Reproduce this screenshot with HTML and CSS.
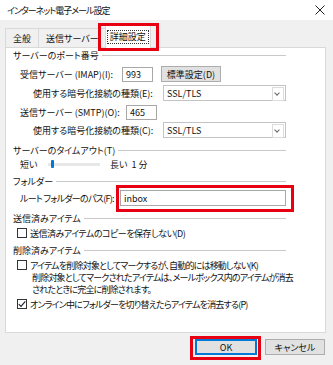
FILE: index.html
```html
<!DOCTYPE html>
<html lang="ja">
<head>
    <meta charset="UTF-8">
    <title>インターネット電子メール設定</title>
    <link rel="stylesheet" href="styles.css">
</head>
<body>

    <div class="window">
        <!-- タイトルバー -->
        <div class="titlebar">
            <span class="title">インターネット電子メール設定</span>
            <svg class="close" width="10" height="10" viewBox="0 0 10 10">
                <path d="M0.5 0.5 L9.5 9.5 M9.5 0.5 L0.5 9.5" stroke="#222" stroke-width="1"/>
            </svg>
        </div>

        <div class="dialog">
            <!-- タブ -->
            <div class="tabs">
                <div class="tab">全般</div>
                <div class="tab">送信サーバー</div>
                <div class="tab active mark mark-tab"><span class="focus">詳細設定</span></div>
            </div>

            <div class="panel">
                <div class="legend"><span>サーバーのポート番号</span></div>
                <div class="row r-imap">
                    <span class="label l-imap">受信サーバー (IMAP)(I):</span>
                    <span class="field port">993</span>
                    <span class="btn std">標準設定(D)</span>
                </div>
                <div class="row r-enc1">
                    <span class="label l-enc">使用する暗号化接続の種類(E):</span>
                    <span class="select">SSL/TLS<span class="arrow"></span></span>
                </div>
                <div class="row r-smtp">
                    <span class="label l-smtp">送信サーバー (SMTP)(O):</span>
                    <span class="field port">465</span>
                </div>
                <div class="row r-enc2">
                    <span class="label l-enc">使用する暗号化接続の種類(C):</span>
                    <span class="select">SSL/TLS<span class="arrow"></span></span>
                </div>

                <div class="legend lg-timeout"><span>サーバーのタイムアウト(T)</span></div>
                <div class="row r-slider">
                    <span class="label l-short">短い</span>
                    <span class="slider"><span class="thumb"></span></span>
                    <span class="label">長い&nbsp; 1 分</span>
                </div>

                <div class="legend lg-folder"><span>フォルダー</span></div>
                <div class="row r-root">
                    <span class="label l-root">ルート フォルダーのパス(F):</span>
                    <span class="field root mark mark-root">inbox</span>
                </div>

                <div class="legend lg-sent"><span>送信済みアイテム</span></div>
                <div class="check-row r-sent">
                    <span class="box"></span>
                    <span class="text-sent">送信済みアイテムのコピーを保存しない(D)</span>
                </div>

                <div class="legend lg-del"><span>削除済みアイテム</span></div>
                <div class="check-row r-del">
                    <span class="box"></span>
                    <span class="tight">アイテムを削除対象としてマークするが、自動的には移動しない(K)</span>
                </div>
                <div class="note tight">
                    削除対象としてマークされたアイテムは、メールボックス内のアイテムが消去<br>
                    されたときに完全に削除されます。
                </div>
                <div class="check-row r-purge">
                    <span class="box checked">
                        <svg width="8" height="8" viewBox="0 0 8 8">
                            <path d="M0.8 4.2 L3 6.4 L7.3 1.3" fill="none" stroke="#222" stroke-width="1.1"/>
                        </svg>
                    </span>
                    <span class="tight">オンライン中にフォルダーを切り替えたらアイテムを消去する(P)</span>
                </div>
            </div>

            <!-- ボタン -->
            <div class="buttons">
                <span class="btn ok mark mark-ok">OK</span>
                <span class="btn cancel">キャンセル</span>
            </div>
        </div>
    </div>

</body>
</html>
```

FILE: styles.css
```css
/* 全体 */
body {
    margin: 0;
    font-family: "Noto Sans CJK JP", "Noto Sans", sans-serif;
    font-size: 9px;
    font-feature-settings: "palt";
    color: #111;
    background: #f0f0f0;
}

.window {
    width: 333px;
    height: 365px;
    background: #f0f0f0;
    overflow: hidden;
}

/* タイトルバー */
.titlebar {
    height: 20px;
    background: #fff;
    display: flex;
    align-items: center;
    padding: 0 7px;
    font-size: 9px;
}

.title {
    flex: 1;
    letter-spacing: -1px;
}

.close {
    margin-right: 1px;
}

/* タブ */
.dialog {
    padding-top: 5px;
}

.tabs {
    display: flex;
    align-items: flex-end;
    height: 22px;
    padding-left: 5px;
}

.tab {
    height: 19px;
    box-sizing: border-box;
    border: 1px solid #d9d9d9;
    border-bottom: none;
    background: #f0f0f0;
    display: flex;
    align-items: center;
    padding: 0 7px;
    margin-right: -1px;
}

.tab.active {
    height: 23px;
    background: #fff;
    margin-bottom: -1px;
    margin-left: -1px;
    padding: 0 2px;
    position: relative;
    z-index: 1;
}

.focus {
    outline: 1px dotted #333;
    padding: 0 2px;
    line-height: 12px;
}

/* パネル */
.panel {
    margin-left: 5px;
    width: 321px;
    height: 286px;
    box-sizing: border-box;
    border: 1px solid #d9d9d9;
    background: #fff;
}

.legend {
    display: flex;
    align-items: center;
    height: 14px;
    margin-left: 7px;
    width: 273px;
}

.legend::after {
    content: "";
    flex: 1;
    height: 1px;
    background: #c8c8c8;
    margin-left: 3px;
}

.lg-timeout { margin-top: 5px; }
.lg-folder { margin-top: 3px; }
.lg-sent { margin-top: 5px; }
.lg-del { margin-top: 3px; }

.row {
    display: flex;
    align-items: center;
    height: 16px;
    padding-left: 14px;
}

.r-imap { margin-top: 4px; }
.r-enc1 { margin-top: 3px; padding-left: 27px; }
.r-smtp { margin-top: 3px; }
.r-enc2 { margin-top: 2px; padding-left: 27px; }
.r-slider { height: 14px; }
.r-root { margin-top: 2px; }

.label {
    white-space: nowrap;
}

.l-imap { width: 102px; }
.l-smtp { width: 106px; }
.l-enc { width: 130px; }
.l-root { width: 100px; letter-spacing: -0.7px; }
.l-short { width: 28px; }

/* 入力欄 */
.field {
    box-sizing: border-box;
    height: 15px;
    border: 1px solid #a8a8a8;
    background: #fff;
    display: flex;
    align-items: center;
    padding-left: 3px;
}

.port {
    width: 31px;
    margin-right: 8px;
}

.root {
    width: 166px;
    height: 16px;
}

.select {
    box-sizing: border-box;
    width: 123px;
    height: 16px;
    border: 1px solid #c3c3c3;
    background: #fff;
    display: flex;
    align-items: center;
    padding-left: 3px;
    position: relative;
}

.arrow {
    position: absolute;
    right: 1px;
    top: 1px;
    width: 10px;
    height: 12px;
    border: 1px solid #dcdcdc;
    background: #fff;
}

.arrow::after {
    content: "";
    position: absolute;
    left: 2px;
    top: 3px;
    width: 3px;
    height: 3px;
    border-right: 1px solid #666;
    border-bottom: 1px solid #666;
    transform: rotate(45deg);
}

/* スライダー */
.slider {
    width: 52px;
    height: 3px;
    background: #e7e7e7;
    margin-right: 10px;
    position: relative;
}

.thumb {
    position: absolute;
    left: 3px;
    top: -3px;
    width: 3px;
    height: 8px;
    border-radius: 1px;
    background: #0078d7;
}

/* チェックボックス */
.check-row {
    display: flex;
    align-items: center;
    height: 14px;
    padding-left: 11px;
    white-space: nowrap;
}

.r-sent { margin-top: 1px; }
.r-del { margin-top: 1px; }

.text-sent {
    letter-spacing: -0.5px;
}

.tight {
    letter-spacing: -0.8px;
}

.box {
    box-sizing: border-box;
    width: 10px;
    height: 10px;
    border: 1px solid #333;
    background: #fff;
    margin-right: 3px;
    display: flex;
    align-items: center;
    justify-content: center;
}

.note {
    padding-left: 26px;
    line-height: 12px;
    margin-top: 0;
    white-space: nowrap;
}

.r-purge { margin-top: 1px; }

/* ボタン */
.btn {
    box-sizing: border-box;
    height: 16px;
    border: 1px solid #adadad;
    background: #e1e1e1;
    display: inline-flex;
    align-items: center;
    justify-content: center;
}

.std {
    width: 60px;
}

.buttons {
    display: flex;
    justify-content: flex-end;
    padding-right: 8px;
    margin-top: 6px;
    gap: 8px;
}

.ok {
    width: 62px;
    border: 2px solid #0078d7;
}

.cancel {
    width: 60px;
}

/* 赤枠の注記 */
.mark {
    position: relative;
}

.mark::before {
    content: "";
    position: absolute;
    border: 3px solid #e60012;
    pointer-events: none;
}

.mark-tab::before {
    left: -8px;
    right: -9px;
    top: -3px;
    bottom: -3px;
}

.mark-root::before {
    left: -5px;
    right: -9px;
    top: -6px;
    bottom: -7px;
}

.mark-ok::before {
    left: -7px;
    right: -6px;
    top: -5px;
    bottom: -7px;
}
```
